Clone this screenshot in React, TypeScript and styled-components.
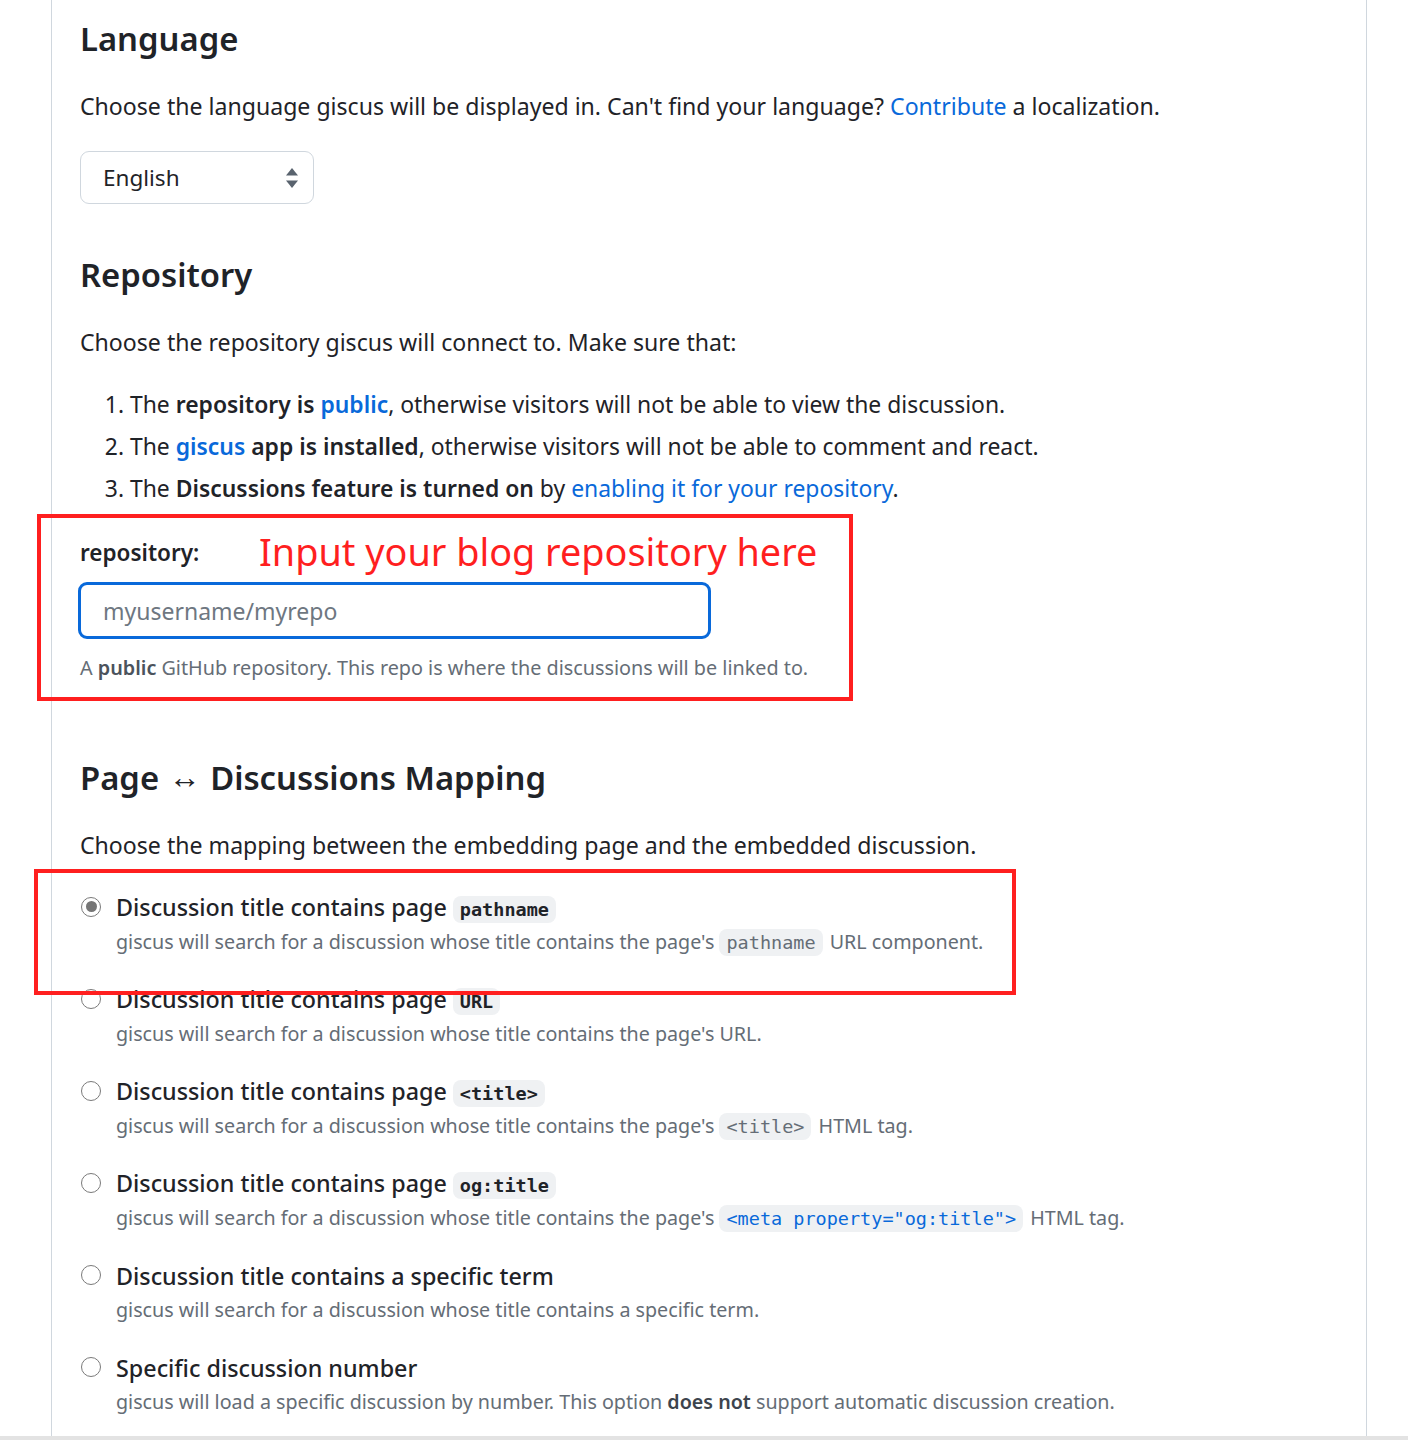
import React from "react";
import styled, { createGlobalStyle } from "styled-components";

const Global = createGlobalStyle`
  html, body { margin: 0; padding: 0; background: #ffffff; }
  body { font-family: "Noto Sans", "Open Sans", sans-serif; color: #1f2328; }
  * { box-sizing: border-box; }
`;

const Page = styled.div`
  position: relative;
  height: 1440px;
  overflow: hidden;
  display: flex;
  flex-direction: column;
`;

const Container = styled.main`
  flex: 1;
  margin-left: 51px;
  width: 1316px;
  border-left: 1px solid #d0d7de;
  border-right: 1px solid #d0d7de;
  padding: 16px 28px 0;
  overflow: hidden;
`;

const BottomBar = styled.div`
  height: 4px;
  background: #e3e3e3;
`;

const Heading = styled.h2<{ $gap?: number }>`
  margin: ${(p) => p.$gap ?? 0}px 0 0;
  font-size: 32.8px;
  line-height: 45px;
  font-weight: 600;
  color: #1f2328;
`;

const Arrow = styled.span`
  font-size: 32px;
  font-weight: 400;
  position: relative;
  top: -2px;
  margin: 0 1px;
`;

const Lead = styled.p`
  margin: 27px 0 0;
  font-size: 23.1px;
  line-height: 36px;
`;

const Link = styled.a`
  color: #0969da;
  text-decoration: none;
`;

const Strong = styled.strong`
  font-weight: 600;
`;

const SelectBox = styled.div`
  margin-top: 27px;
  width: 234px;
  height: 53px;
  border: 1px solid #d0d7de;
  border-radius: 9px;
  display: flex;
  align-items: center;
  justify-content: space-between;
  padding: 0 14px 0 22px;
  font-size: 22.5px;
`;

const List = styled.ol`
  margin: 24px 0 0;
  padding-left: 50px;
  font-size: 22.9px;
  line-height: 42px;
`;

const Label = styled.label`
  display: block;
  margin-top: 26px;
  font-size: 22.5px;
  line-height: 33px;
  font-weight: 600;
`;

const TextInput = styled.input`
  display: block;
  margin: 13px 0 0 -2px;
  width: 633px;
  height: 57px;
  border: 3px solid #0969da;
  border-radius: 9px;
  padding: 0 22px;
  font-family: inherit;
  font-size: 23px;
  color: #1f2328;
  outline: none;
  &::placeholder { color: #6e7781; }
`;

const Note = styled.p`
  margin: 13px 0 0;
  font-size: 19.8px;
  line-height: 31px;
  color: #656d76;
  & b { font-weight: 600; color: #4b535c; }
`;

const RadioList = styled.div`
  margin-top: 27px;
  display: flex;
  flex-direction: column;
  gap: 25px;
`;

const RadioItem = styled.div`
  display: grid;
  grid-template-columns: 36px 1fr;
  grid-template-rows: 36px 31px;
`;

const RadioCircle = styled.span<{ $checked?: boolean }>`
  grid-row: 1;
  align-self: center;
  margin-left: 1px;
  margin-top: -3px;
  width: 20px;
  height: 20px;
  border-radius: 50%;
  border: 1.5px solid #7a7a7a;
  display: flex;
  align-items: center;
  justify-content: center;
  &::after {
    content: "";
    display: ${(p) => (p.$checked ? "block" : "none")};
    width: 11px;
    height: 11px;
    border-radius: 50%;
    background: #767676;
  }
`;

const RadioTitle = styled.div`
  grid-column: 2;
  font-size: 23.3px;
  line-height: 36px;
  font-weight: 500;
  display: flex;
  align-items: center;
`;

const RadioDesc = styled.div`
  grid-column: 2;
  font-size: 19.7px;
  line-height: 31px;
  color: #656d76;
  & b { font-weight: 600; color: #3d444d; }
`;

const Code = styled.code<{ $bold?: boolean; $blue?: boolean }>`
  font-family: "DejaVu Sans Mono", "Liberation Mono", monospace;
  font-size: 18.5px;
  font-weight: ${(p) => (p.$bold ? 700 : 400)};
  color: ${(p) => (p.$blue ? "#0969da" : "inherit")};
  background: #eff1f3;
  border-radius: 8px;
  padding: 3px 7px;
  margin: 0 2px 0 0;
`;

const Callout = styled.div<{ $x: number; $y: number; $w: number; $h: number }>`
  position: absolute;
  left: ${(p) => p.$x}px;
  top: ${(p) => p.$y}px;
  width: ${(p) => p.$w}px;
  height: ${(p) => p.$h}px;
  border: 4px solid #ff1f1f;
  pointer-events: none;
`;

const CalloutText = styled.div`
  position: absolute;
  left: 259px;
  top: 525px;
  font-family: "Noto Sans", sans-serif;
  font-size: 37.8px;
  line-height: 54px;
  color: #ff1f1f;
  white-space: nowrap;
`;

const Arrows = () => (
  <svg width="14" height="22" viewBox="0 0 14 22" aria-hidden>
    <path d="M7 1 L13 8.5 H1 Z" fill="#59636e" />
    <path d="M7 21 L13 13.5 H1 Z" fill="#59636e" />
  </svg>
);

type Opt = { title: React.ReactNode; desc: React.ReactNode; checked?: boolean };

const options: Opt[] = [
  {
    title: <>Discussion title contains page <Code $bold>pathname</Code></>,
    desc: <>giscus will search for a discussion whose title contains the page's <Code>pathname</Code> URL component.</>,
    checked: true,
  },
  {
    title: <>Discussion title contains page <Code $bold>URL</Code></>,
    desc: <>giscus will search for a discussion whose title contains the page's URL.</>,
  },
  {
    title: <>Discussion title contains page <Code $bold>&lt;title&gt;</Code></>,
    desc: <>giscus will search for a discussion whose title contains the page's <Code>&lt;title&gt;</Code> HTML tag.</>,
  },
  {
    title: <>Discussion title contains page <Code $bold>og:title</Code></>,
    desc: <>giscus will search for a discussion whose title contains the page's <Code $blue>&lt;meta property="og:title"&gt;</Code> HTML tag.</>,
  },
  {
    title: <>Discussion title contains a specific term</>,
    desc: <>giscus will search for a discussion whose title contains a specific term.</>,
  },
  {
    title: <>Specific discussion number</>,
    desc: <>giscus will load a specific discussion by number. This option <b>does not</b> support automatic discussion creation.</>,
  },
];

export default function App() {
  return (
    <Page>
      <Global />
      <Container>
        <Heading>Language</Heading>
        <Lead>
          Choose the language giscus will be displayed in. Can't find your language?{" "}
          <Link href="#">Contribute</Link> a localization.
        </Lead>
        <SelectBox>
          <span>English</span>
          <Arrows />
        </SelectBox>

        <Heading $gap={48}>Repository</Heading>
        <Lead>Choose the repository giscus will connect to. Make sure that:</Lead>
        <List>
          <li>
            The <Strong>repository is <Link href="#">public</Link></Strong>, otherwise visitors will not be able to view the discussion.
          </li>
          <li>
            The <Strong><Link href="#">giscus</Link> app is installed</Strong>, otherwise visitors will not be able to comment and react.
          </li>
          <li>
            The <Strong>Discussions feature is turned on</Strong> by <Link href="#">enabling it for your repository</Link>.
          </li>
        </List>
        <Label htmlFor="repo">repository:</Label>
        <TextInput id="repo" placeholder="myusername/myrepo" />
        <Note>
          A <b>public</b> GitHub repository. This repo is where the discussions will be linked to.
        </Note>

        <Heading $gap={72}>Page <Arrow>↔</Arrow> Discussions Mapping</Heading>
        <Lead>Choose the mapping between the embedding page and the embedded discussion.</Lead>
        <RadioList>
          {options.map((o, i) => (
            <RadioItem key={i}>
              <RadioCircle $checked={o.checked} />
              <RadioTitle><span>{o.title}</span></RadioTitle>
              <RadioDesc>{o.desc}</RadioDesc>
            </RadioItem>
          ))}
        </RadioList>
      </Container>
      <BottomBar />

      <Callout $x={37} $y={514} $w={816} $h={187} />
      <CalloutText>Input your blog repository here</CalloutText>
      <Callout $x={34} $y={869} $w={982} $h={126} />
    </Page>
  );
}
